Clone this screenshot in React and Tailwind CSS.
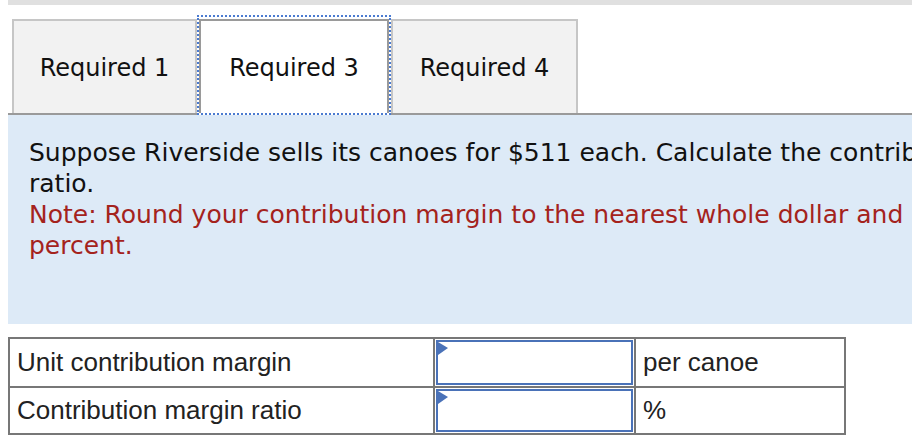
import React from 'react';

const Tab = ({ label }) => (
    <div className="w-full h-full flex items-center justify-center pt-[2px]">
        <span className="text-[24px] text-[#111]">{label}</span>
    </div>
);

const InputCell = () => (
    <div className="relative w-[199px] h-full p-[1px]">
        <div className="relative w-full h-full border-2 border-[#4a72b8] bg-white">
            <svg className="absolute left-0 top-0" width="11" height="14" viewBox="0 0 11 14">
                <polygon points="0,0 10,6 0,13" fill="#4a72b8" />
            </svg>
        </div>
    </div>
);

const App = () => {
    return (
        <div className="w-[912px] h-[438px] bg-white overflow-hidden" style={{ fontFamily: '"DejaVu Sans", Verdana, sans-serif' }}>
            {/* top strip */}
            <div className="ml-[8px] h-[5px] bg-[#e0e0e0]"></div>

            {/* tab row */}
            <div className="ml-[8px] h-[110px] border-b-2 border-[#9a9a9a] flex items-end pl-[4px]">
                <div className="w-[185px] h-[94px] bg-[#f2f2f2] border-2 border-b-0 border-[#c6c6c6]">
                    <Tab label="Required 1" />
                </div>
                <div className="relative z-10 w-[194px] h-[100px] -mb-[2px] border-2 border-dotted border-[#4b7bd0] pt-[2px] bg-white">
                    <div className="h-full border-2 border-b-0 border-[#9a9a9a] bg-white">
                        <Tab label="Required 3" />
                    </div>
                </div>
                <div className="w-[187px] h-[94px] bg-[#f2f2f2] border-2 border-b-0 border-[#c6c6c6]">
                    <Tab label="Required 4" />
                </div>
            </div>

            {/* question panel */}
            <div className="ml-[8px] h-[209px] bg-[#ddeaf7] pl-[21px] pt-[22px] text-[25px] leading-[31px]">
                <p className="whitespace-nowrap text-[#111]">
                    Suppose Riverside sells its canoes for $511 each. Calculate the contribution margin per canoe and the contribution margin
                </p>
                <p className="whitespace-nowrap text-[#111]">ratio.</p>
                <p className="whitespace-nowrap text-[#a4231d]">
                    Note: Round your contribution margin to the nearest whole dollar and contribution margin ratio to the nearest whole
                </p>
                <p className="whitespace-nowrap text-[#a4231d]">percent.</p>
            </div>

            {/* answer table */}
            <div className="mt-[13px] ml-[8px] w-[838px] border-2 border-[#777] text-[26px] text-[#222]" style={{ fontFamily: '"Liberation Sans", Arial, sans-serif' }}>
                <div className="flex h-[49px] border-b-2 border-[#777]">
                    <div className="w-[425px] border-r-2 border-[#777] pl-[7px] flex items-center">Unit contribution margin</div>
                    <InputCell />
                    <div className="flex-1 border-l-2 border-[#777] pl-[7px] flex items-center">per canoe</div>
                </div>
                <div className="flex h-[45px]">
                    <div className="w-[425px] border-r-2 border-[#777] pl-[7px] flex items-center">Contribution margin ratio</div>
                    <InputCell />
                    <div className="flex-1 border-l-2 border-[#777] pl-[7px] flex items-center">%</div>
                </div>
            </div>
        </div>
    );
};

export default App;
